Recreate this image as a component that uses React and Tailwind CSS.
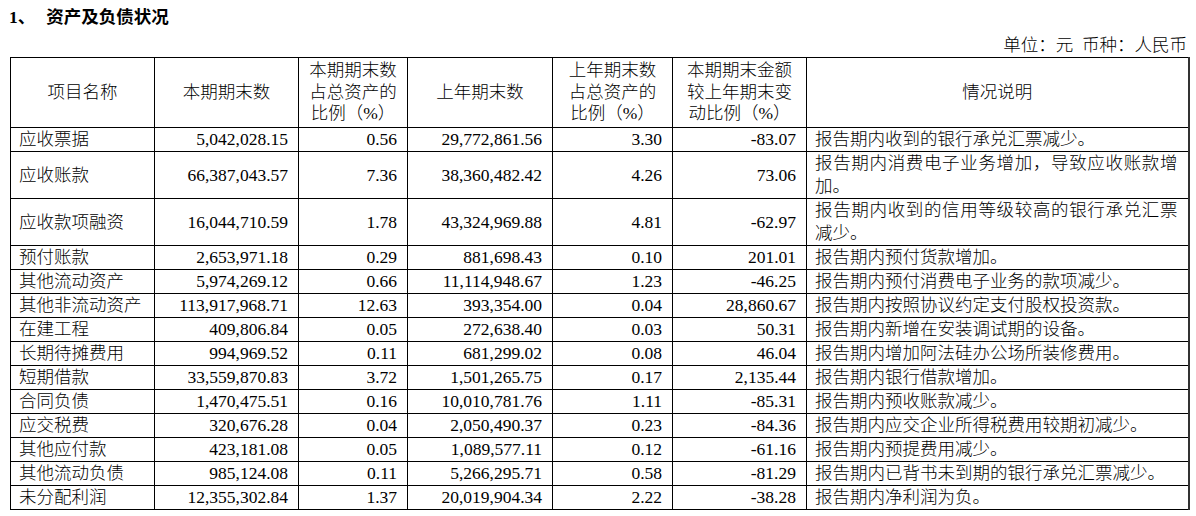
import React from "react";

const rows = [
  ["应收票据", "5,042,028.15", "0.56", "29,772,861.56", "3.30", "-83.07", "报告期内收到的银行承兑汇票减少。"],
  ["应收账款", "66,387,043.57", "7.36", "38,360,482.42", "4.26", "73.06", "报告期内消费电子业务增加，导致应收账款增加。"],
  ["应收款项融资", "16,044,710.59", "1.78", "43,324,969.88", "4.81", "-62.97", "报告期内收到的信用等级较高的银行承兑汇票减少。"],
  ["预付账款", "2,653,971.18", "0.29", "881,698.43", "0.10", "201.01", "报告期内预付货款增加。"],
  ["其他流动资产", "5,974,269.12", "0.66", "11,114,948.67", "1.23", "-46.25", "报告期内预付消费电子业务的款项减少。"],
  ["其他非流动资产", "113,917,968.71", "12.63", "393,354.00", "0.04", "28,860.67", "报告期内按照协议约定支付股权投资款。"],
  ["在建工程", "409,806.84", "0.05", "272,638.40", "0.03", "50.31", "报告期内新增在安装调试期的设备。"],
  ["长期待摊费用", "994,969.52", "0.11", "681,299.02", "0.08", "46.04", "报告期内增加阿法硅办公场所装修费用。"],
  ["短期借款", "33,559,870.83", "3.72", "1,501,265.75", "0.17", "2,135.44", "报告期内银行借款增加。"],
  ["合同负债", "1,470,475.51", "0.16", "10,010,781.76", "1.11", "-85.31", "报告期内预收账款减少。"],
  ["应交税费", "320,676.28", "0.04", "2,050,490.37", "0.23", "-84.36", "报告期内应交企业所得税费用较期初减少。"],
  ["其他应付款", "423,181.08", "0.05", "1,089,577.11", "0.12", "-61.16", "报告期内预提费用减少。"],
  ["其他流动负债", "985,124.08", "0.11", "5,266,295.71", "0.58", "-81.29", "报告期内已背书未到期的银行承兑汇票减少。"],
  ["未分配利润", "12,355,302.84", "1.37", "20,019,904.34", "2.22", "-38.28", "报告期内净利润为负。"],
];

const th = "border border-black font-light text-center align-middle p-0 leading-[21.5px]";
const num = "border border-black text-right align-middle pl-1 pr-[10px] py-0 whitespace-nowrap";

export default function App() {
  return (
    <div className="w-[1196px] h-[516px] bg-white text-black font-['Liberation_Serif','Noto_Sans_CJK_SC',serif] text-[17.5px] leading-[23px] overflow-hidden">
      <div className="pt-[6px] pb-[5px] pl-[9px] font-bold flex">
        <span>1、</span>
        <span className="ml-[11px]">资产及负债状况</span>
      </div>
      <div className="text-right pr-[9px] h-[23px] font-light">单位：元&nbsp; 币种：人民币</div>
      <table className="ml-[10px] w-[1178px] table-fixed border-collapse font-light border-r-2 border-r-[#333]">
        <colgroup>
          <col className="w-[144px]" />
          <col className="w-[144px]" />
          <col className="w-[109px]" />
          <col className="w-[145px]" />
          <col className="w-[120px]" />
          <col className="w-[134px]" />
          <col className="w-[382px]" />
        </colgroup>
        <thead>
          <tr className="h-[70px]">
            <th className={th}>项目名称</th>
            <th className={th}>本期期末数</th>
            <th className={th}>本期期末数<br />占总资产的<br />比例（%）</th>
            <th className={th}>上年期末数</th>
            <th className={th}>上年期末数<br />占总资产的<br />比例（%）</th>
            <th className={th}>本期期末金额<br />较上年期末变<br />动比例（%）</th>
            <th className={th}>情况说明</th>
          </tr>
        </thead>
        <tbody>
          {rows.map((r) => (
            <tr key={r[0]}>
              <td className="border border-black align-middle pl-[8px] pr-1 py-0 whitespace-nowrap">{r[0]}</td>
              <td className={num}>{r[1]}</td>
              <td className={num}>{r[2]}</td>
              <td className={num}>{r[3]}</td>
              <td className={num}>{r[4]}</td>
              <td className={num}>{r[5]}</td>
              <td className="border border-black align-middle pl-[8px] pr-[10px] py-0 text-justify">{r[6]}</td>
            </tr>
          ))}
        </tbody>
      </table>
    </div>
  );
}
